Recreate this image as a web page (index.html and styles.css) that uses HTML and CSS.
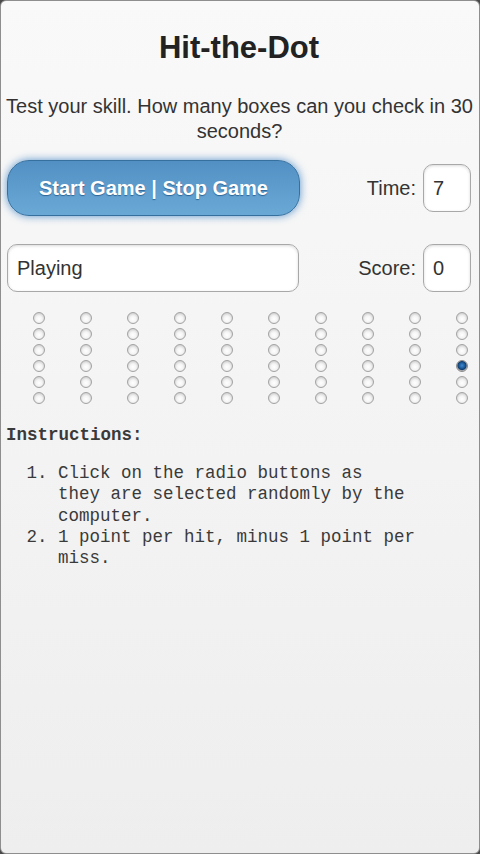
FILE: index.html
```html
<!DOCTYPE html>
<html lang="en">
<head>
<meta charset="utf-8">
<title>Hit-the-Dot</title>
<link rel="stylesheet" href="styles.css">
</head>
<body>
<div class="window">
  <h1 class="title">Hit-the-Dot</h1>
  <p class="intro">Test your skill. How many boxes can you check in 30 seconds?</p>

  <div class="row row-top">
    <button class="btn" type="button">Start Game | Stop Game</button>
    <div class="field">
      <label class="label" for="time">Time:</label>
      <input class="box small" id="time" type="text" value="7">
    </div>
  </div>

  <div class="row row-second">
    <input class="box status" type="text" value="Playing">
    <div class="field">
      <label class="label" for="score">Score:</label>
      <input class="box small" id="score" type="text" value="0">
    </div>
  </div>

  <div class="grid" id="grid"></div>

  <div class="instructions">
    <div class="inst-head">Instructions:</div>
    <ol class="inst-list">
      <li>Click on the radio buttons as<br>they are selected randomly by the<br>computer.</li>
      <li>1 point per hit, minus 1 point per<br>miss.</li>
    </ol>
  </div>
</div>
<script>
  (function () {
    var g = document.getElementById('grid');
    for (var r = 0; r < 6; r++) {
      for (var c = 0; c < 10; c++) {
        var i = document.createElement('input');
        i.type = 'radio';
        i.className = 'dot';
        i.name = 'd' + r + '_' + c;
        if (r === 3 && c === 9) i.checked = true;
        g.appendChild(i);
      }
    }
  })();
</script>
</body>
</html>
```

FILE: styles.css
```css
html, body {
  margin: 0;
  padding: 0;
  background: #4a4a4a;
}

.window {
  box-sizing: border-box;
  width: 480px;
  height: 854px;
  border: 1px solid #8e8e8e;
  border-radius: 6px;
  background: linear-gradient(#f9f9f9, #eeeeee);
  padding: 0 8px 0 6px;
  font-family: "Liberation Sans", Arial, sans-serif;
  color: #333;
  overflow: hidden;
}

.title {
  margin: 29px 0 0;
  font-size: 31px;
  line-height: 36px;
  font-weight: bold;
  text-align: center;
  color: #222;
}

.intro {
  margin: 28px -6px 0 -5px;
  font-size: 20px;
  line-height: 25px;
  text-align: center;
}

.row {
  display: flex;
  align-items: center;
  justify-content: space-between;
}

.row-top {
  margin-top: 16px;
  height: 56px;
}

.row-second {
  margin-top: 28px;
  height: 48px;
}

.btn {
  box-sizing: border-box;
  width: 293px;
  height: 56px;
  border: 1px solid #35709f;
  border-radius: 22px;
  background: linear-gradient(#5290c4, #6aa9d6);
  box-shadow: 0 0 9px rgba(64, 130, 196, 0.85);
  color: #fff;
  font-family: "Liberation Sans", Arial, sans-serif;
  font-size: 20px;
  font-weight: bold;
  text-shadow: 0 1px 1px #2c6596;
  padding: 0;
}

.field {
  display: flex;
  align-items: center;
  gap: 7px;
}

.label {
  font-size: 20px;
  color: #333;
}

.box {
  box-sizing: border-box;
  height: 48px;
  border: 1px solid #a8a8a8;
  border-radius: 10px;
  background: #fff;
  box-shadow: inset 0 1px 3px rgba(0, 0, 0, 0.15);
  font-family: "Liberation Sans", Arial, sans-serif;
  font-size: 20px;
  color: #333;
  padding: 0 9px;
  outline: none;
}

.small {
  width: 48px;
}

.status {
  width: 292px;
}

.grid {
  margin-top: 20px;
  display: grid;
  grid-template-columns: repeat(10, 12px);
  grid-auto-rows: 12px;
  row-gap: 4px;
  justify-content: space-between;
  padding: 0 3px 0 26px;
}

.dot {
  appearance: none;
  -webkit-appearance: none;
  box-sizing: border-box;
  width: 12px;
  height: 12px;
  margin: 0;
  border-radius: 50%;
  border: 1px solid #a3a3a3;
  background: radial-gradient(circle at 50% 60%, #ffffff 0, #f4f4f4 40%, #d2d2d2 75%, #bdbdbd 100%);
}

.dot:checked {
  border-color: #8a8a8a;
  background: radial-gradient(circle at 50% 45%, #3f8ad0 0, #1f5e9e 35%, #123f70 55%, #b9b9b9 70%, #d6d6d6 100%);
}

.instructions {
  margin-top: 21px;
  margin-left: -1px;
  font-family: "Liberation Mono", "Courier New", monospace;
  font-size: 17.5px;
  line-height: 21px;
  color: #3a3a3a;
}

.inst-head {
  font-weight: bold;
}

.inst-list {
  margin: 17px 0 0;
  padding-left: 52px;
  line-height: 21.25px;
}
```
